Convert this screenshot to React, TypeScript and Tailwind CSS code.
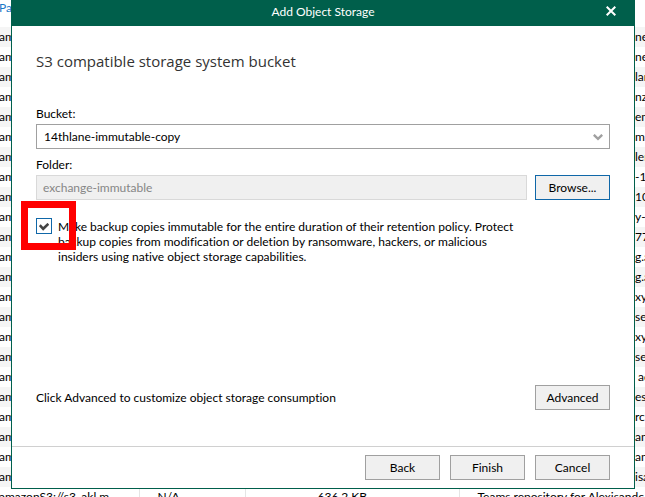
const descriptions = [
  "ne", "ne", "lan", "nz", "em", "m", "len", "-10", "10", "y-1", "77", "g.a",
  "g.a", "xy.", "sea", "xy.", "sea", " ad", "ese", "rch", "an", "an", "isa",
];

const buttonClass =
  "h-[25px] w-[75px] shrink-0 border bg-[#f0f0f0] text-center text-[12px] leading-4 text-black";

function RepositoryTable() {
  return (
    <table className="w-full table-fixed border-collapse whitespace-nowrap text-left text-[12px] leading-4">
      <colgroup>
        <col className="w-[139px]" />
        <col className="w-[106px]" />
        <col className="w-[214px]" />
        <col />
      </colgroup>
      <thead>
        <tr className="h-[27px] align-top text-[#1a78c8]">
          <th className="p-0 font-normal">
            <div className="-ml-px">Path</div>
          </th>
          <th className="p-0" />
          <th className="p-0" />
          <th className="p-0" />
        </tr>
      </thead>
      <tbody>
        {descriptions.map((text, i) => (
          <tr key={i} className="h-5 odd:bg-[#f5f5f5]">
            <td className="p-0">
              <div className="-ml-px">am</div>
            </td>
            <td className="p-0" />
            <td className="p-0" />
            <td className="whitespace-pre p-0 pl-[176px]">{text}</td>
          </tr>
        ))}
        <tr className="h-5">
          <td className="border-r border-[#e5e5e5] p-0">
            <div className="-ml-px">amazonS3://s3_akl m</div>
          </td>
          <td className="border-r border-[#e5e5e5] p-0 pl-[18px]">N/A</td>
          <td className="border-r border-[#e5e5e5] p-0 pl-[72px]">636.2 KB</td>
          <td className="p-0 pl-[18px]">Teams repository for Alexisandc</td>
        </tr>
      </tbody>
    </table>
  );
}

function Dialog() {
  return (
    <section
      role="dialog"
      aria-labelledby="dialog-title"
      className="absolute top-0 right-[10px] left-[11px] border border-t-0 border-[#005f4b] bg-white"
    >
      <header className="relative flex h-[26px] items-center justify-center bg-[#005f4b] pb-[2px] text-white">
        <h1 id="dialog-title">Add Object Storage</h1>
        <button type="button" aria-label="Close" className="absolute top-[6px] right-[18px]">
          <svg width="10" height="10" viewBox="0 0 10 10" fill="none" stroke="white" strokeWidth="2">
            <path d="M.7 .7 9.3 9.3M9.3 .7 .7 9.3" />
          </svg>
        </button>
      </header>

      <div className="px-6 pt-6">
        <h2 className="font-['Open_Sans','Noto_Sans',sans-serif] text-[15px] leading-[22px] text-[#333]">
          S3 compatible storage system bucket
        </h2>

        <label htmlFor="bucket" className="mt-[34px] block">Bucket:</label>
        <div className="relative mt-[2px]">
          <select
            id="bucket"
            className="block h-[25px] w-full appearance-none rounded-none border border-[#a0a0a0] bg-white px-[7px] text-[12px]"
          >
            <option>14thlane-immutable-copy</option>
          </select>
          <svg
            className="pointer-events-none absolute top-[10px] right-[7px]"
            width="10" height="7" viewBox="0 0 10 7" fill="none" stroke="#a0a0a0" strokeWidth="2.4"
          >
            <path d="M.8 .8 5 4.8 9.2 .8" />
          </svg>
        </div>

        <label htmlFor="folder" className="mt-2 block">Folder:</label>
        <div className="mt-[2px] flex gap-2">
          <input
            id="folder"
            disabled
            defaultValue="exchange-immutable"
            className="h-[25px] min-w-0 flex-1 border border-[#d9d9d9] bg-[#f0f0f0] px-[6px] text-[12px] text-[#868686]"
          />
          <button type="button" className={`${buttonClass} border-[#0f67a8]`}>Browse...</button>
        </div>

        <div className="relative mt-[18px] flex gap-[6px]">
          <span className="relative size-4 shrink-0">
            <input
              id="immutable"
              type="checkbox"
              defaultChecked
              className="peer block size-4 appearance-none border border-[#0f67a8] bg-white"
            />
            <svg
              className="pointer-events-none absolute top-[5px] left-[3px] hidden peer-checked:block"
              width="10" height="8" viewBox="0 0 10 8" fill="none" stroke="#444" strokeWidth="2.6"
            >
              <path d="M.8 2.2 4.2 5.8 9.4 .8" />
            </svg>
          </span>
          <label htmlFor="immutable" className="whitespace-nowrap pt-px leading-[15px]">
            Make backup copies immutable for the entire duration of their retention policy. Protect<br />
            backup copies from modification or deletion by ransomware, hackers, or malicious<br />
            insiders using native object storage capabilities.
          </label>
          <div className="pointer-events-none absolute -top-[17px] -left-[15px] h-[49px] w-[55px] border-[7px] border-[#ff0000]" />
        </div>

        <div className="mt-[121px] flex items-center justify-between">
          <p>Click Advanced to customize object storage consumption</p>
          <button type="button" className={`${buttonClass} border-[#a0a0a0]`}>Advanced</button>
        </div>
      </div>

      <footer className="mt-9 flex justify-end gap-[10px] border-t border-[#d0d0d0] px-6 py-2">
        <button type="button" className={`${buttonClass} border-[#a0a0a0]`}>Back</button>
        <button type="button" className={`${buttonClass} border-[#a0a0a0]`}>Finish</button>
        <button type="button" className={`${buttonClass} border-[#a0a0a0]`}>Cancel</button>
      </footer>
    </section>
  );
}

export default function App() {
  return (
    <main className="relative h-screen overflow-hidden bg-white font-['Lato','Open_Sans',sans-serif] text-[12px] leading-4 text-black [font-variant-ligatures:none]">
      <RepositoryTable />
      <Dialog />
    </main>
  );
}
